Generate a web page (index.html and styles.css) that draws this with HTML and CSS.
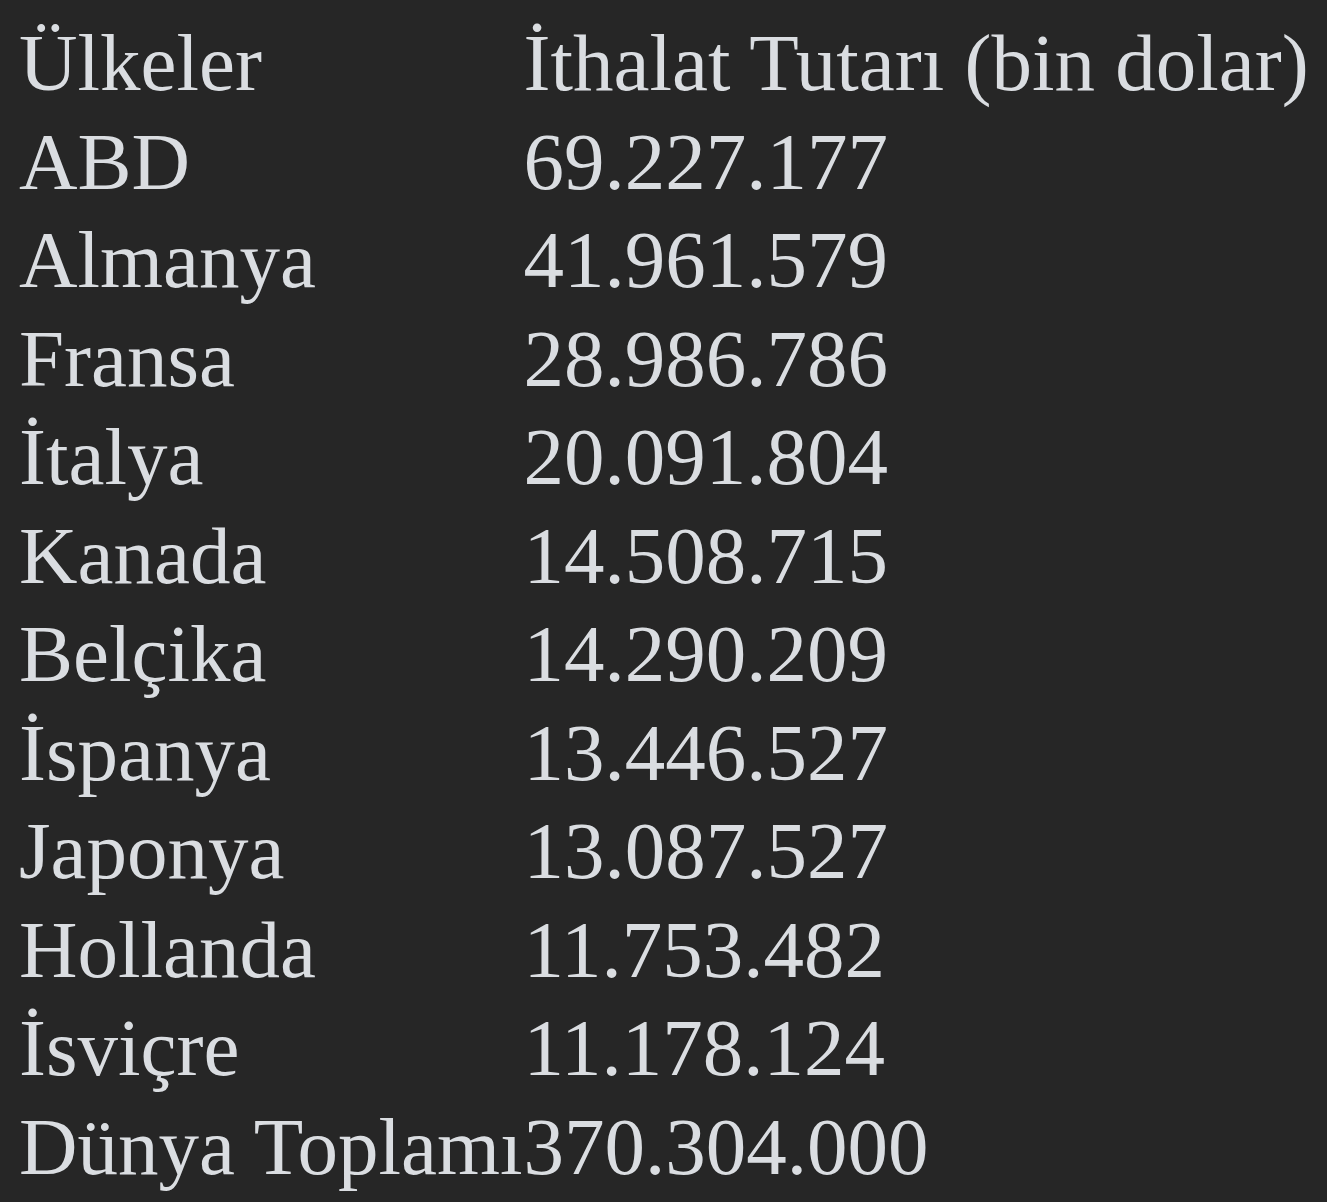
FILE: index.html
```html
<!DOCTYPE html>
<html lang="tr">
<head>
<meta charset="utf-8">
<title>İthalat Tablosu</title>
<link rel="stylesheet" href="styles.css">
</head>
<body>
<table class="data">
  <thead>
    <tr><th>Ülkeler</th><th>İthalat Tutarı (bin dolar)</th></tr>
  </thead>
  <tbody>
    <tr><td>ABD</td><td>69.227.177</td></tr>
    <tr><td>Almanya</td><td>41.961.579</td></tr>
    <tr><td>Fransa</td><td>28.986.786</td></tr>
    <tr><td>İtalya</td><td>20.091.804</td></tr>
    <tr><td>Kanada</td><td>14.508.715</td></tr>
    <tr><td>Belçika</td><td>14.290.209</td></tr>
    <tr><td>İspanya</td><td>13.446.527</td></tr>
    <tr><td>Japonya</td><td>13.087.527</td></tr>
    <tr><td>Hollanda</td><td>11.753.482</td></tr>
    <tr><td>İsviçre</td><td>11.178.124</td></tr>
    <tr><td>Dünya Toplamı</td><td>370.304.000</td></tr>
  </tbody>
</table>
</body>
</html>
```

FILE: styles.css
```css
html {
  background: #262626;
}

body {
  margin: 0;
  padding: 14px 0 0 19px;
  background: #262626;
  color: #dadde1;
  font-family: "Liberation Serif", "Times New Roman", serif;
  font-size: 81px;
}

.data {
  border-collapse: collapse;
  border-spacing: 0;
}

.data th,
.data td {
  font-weight: normal;
  text-align: left;
  padding: 0;
  height: 98.5px;
  line-height: 98.5px;
  vertical-align: baseline;
  white-space: nowrap;
}

.data th:first-child,
.data td:first-child {
  padding-right: 1px;
}
```
